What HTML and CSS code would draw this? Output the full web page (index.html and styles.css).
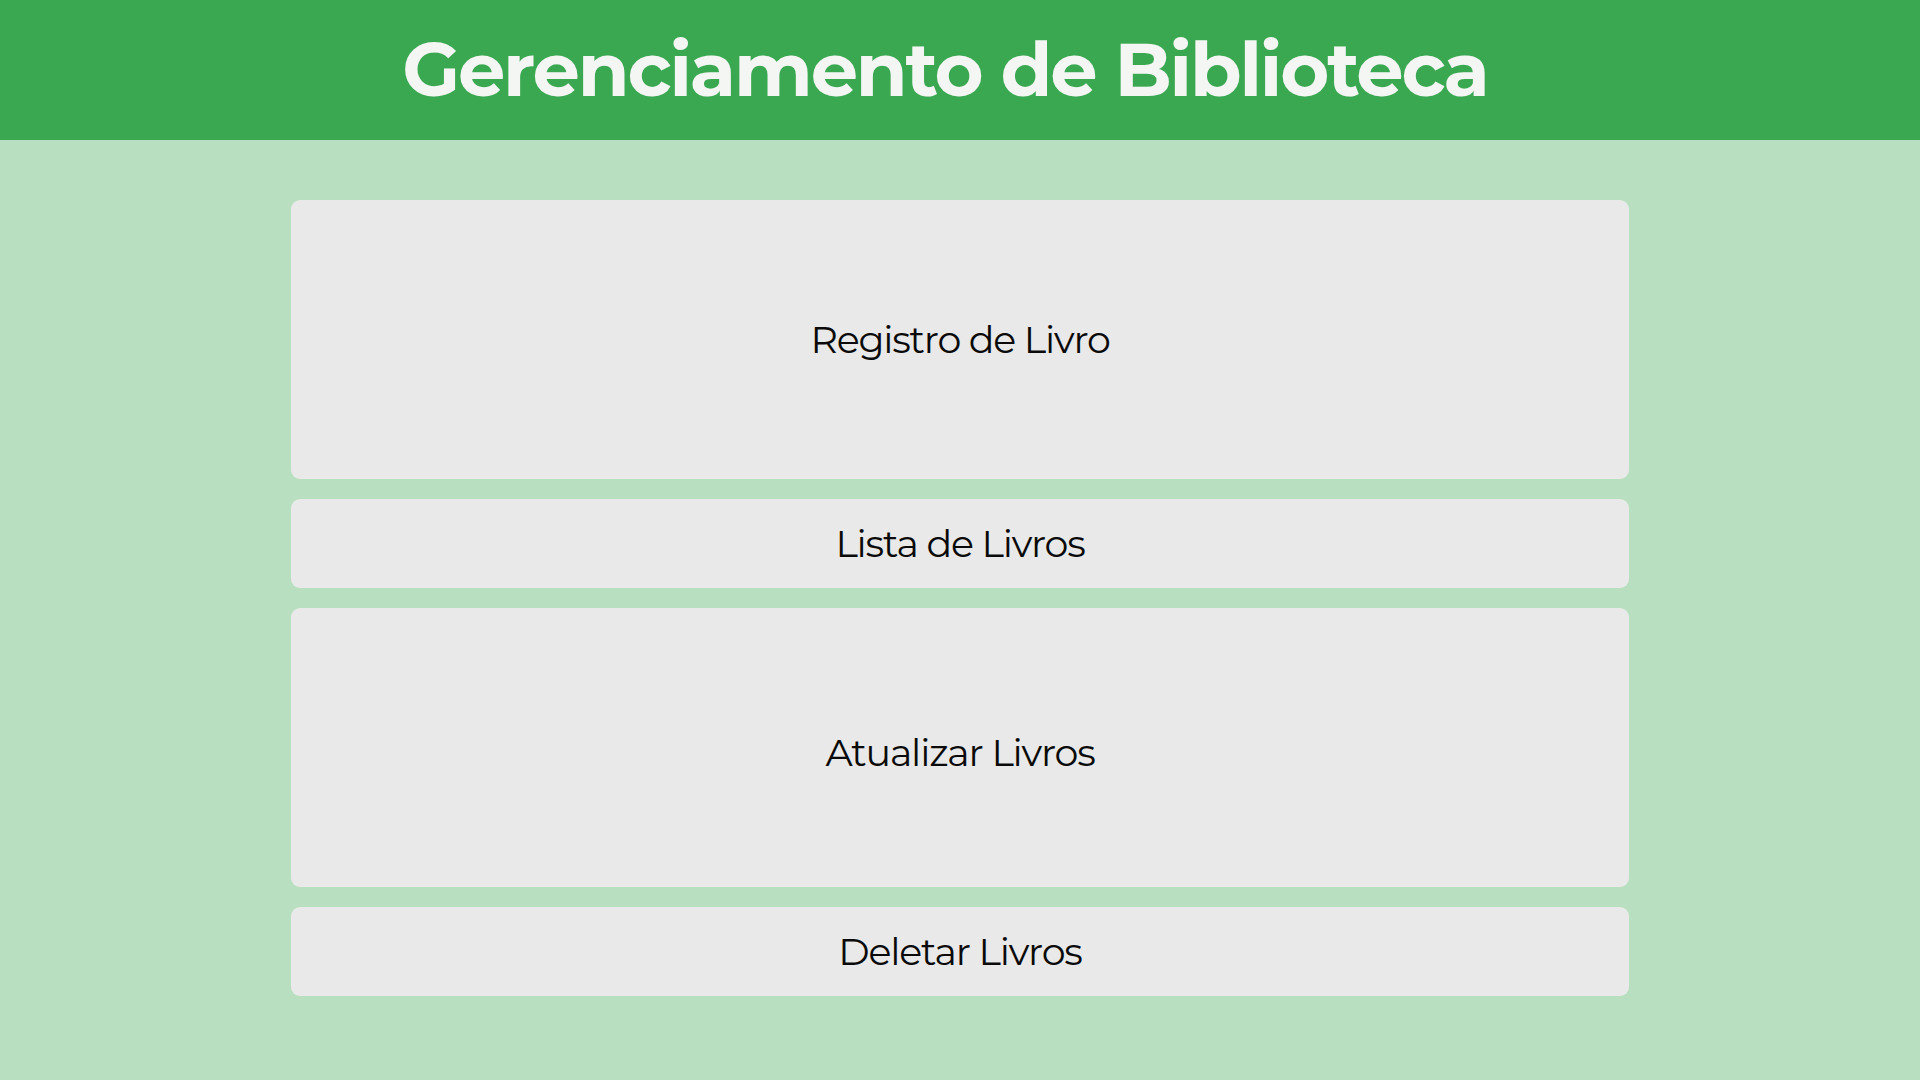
FILE: index.html
```html
<!DOCTYPE html>
<html lang="pt">
<head>
<meta charset="utf-8">
<title>Gerenciamento de Biblioteca</title>
<link rel="stylesheet" href="styles.css">
</head>
<body>
<header class="top-bar">
  <h1 class="title">Gerenciamento de Biblioteca</h1>
</header>
<main class="menu">
  <div class="menu-item menu-item--tall">Registro de Livro</div>
  <div class="menu-item">Lista de Livros</div>
  <div class="menu-item menu-item--tall menu-item--low">Atualizar Livros</div>
  <div class="menu-item">Deletar Livros</div>
</main>
</body>
</html>
```
FILE: styles.css
```css
* { box-sizing: border-box; }
html, body {
  margin: 0;
  padding: 0;
  height: 100%;
}
body {
  background: #b7dfc0;
  font-family: Montserrat, "Open Sans", "Liberation Sans", sans-serif;
}
.top-bar {
  height: 140px;
  background: #3aa850;
  display: flex;
  align-items: center;
  justify-content: center;
  padding-right: 30px;
}
.title {
  margin: 0;
  color: #f3f6f3;
  font-size: 75px;
  font-weight: 700;
  letter-spacing: -2.2px;
  line-height: 1;
  padding-bottom: 2px;
}
.menu {
  width: 1338px;
  margin: 60px auto 0;
  display: flex;
  flex-direction: column;
  gap: 20px;
}
.menu-item {
  height: 89px;
  background: #e9e9e9;
  border-radius: 9px;
  display: flex;
  align-items: center;
  justify-content: center;
  font-size: 38px;
  font-weight: 400;
  color: #0a0a0a;
  letter-spacing: -1.2px;
}
.menu-item--tall {
  height: 279px;
}
.menu-item--low {
  padding-top: 10px;
}
```
